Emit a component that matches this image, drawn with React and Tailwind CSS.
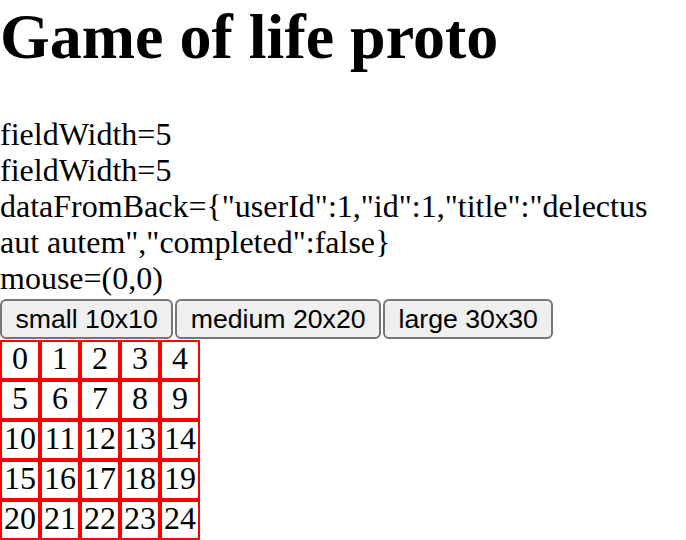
const sizes = [
  { label: "small 10x10" },
  { label: "medium 20x20" },
  { label: "large 30x30" },
];

export default function App() {
  const fieldWidth = 5;
  const cells = Array.from({ length: fieldWidth * fieldWidth }, (_, i) => i);

  return (
    <div className="min-h-[540px] bg-white text-black font-['Liberation_Serif',serif] text-[32px] leading-[36px]">
      <h1 className="text-[64px] font-bold leading-[74px] mb-[42px]">Game of life proto</h1>
      <div>fieldWidth={fieldWidth}</div>
      <div>fieldWidth={fieldWidth}</div>
      <div>
        dataFromBack={'{"userId":1,"id":1,"title":"delectus aut autem","completed":false}'}
      </div>
      <div>mouse=(0,0)</div>
      <div className="flex gap-[2px] pt-[3px] pb-px">
        {sizes.map((s) => (
          <button
            key={s.label}
            className="h-[40px] px-[13.5px] border-2 border-[#767676] rounded-[6px] bg-[#efefef] font-['Liberation_Sans',Arial,sans-serif] text-[26.67px] leading-[30px]"
          >
            {s.label}
          </button>
        ))}
      </div>
      <div className="grid grid-cols-[repeat(5,40px)]">
        {cells.map((n) => (
          <div
            key={n}
            className="w-[40px] h-[40px] border-2 border-[#ff0000] flex items-center justify-center pb-[5px]"
          >
            {n}
          </div>
        ))}
      </div>
    </div>
  );
}
